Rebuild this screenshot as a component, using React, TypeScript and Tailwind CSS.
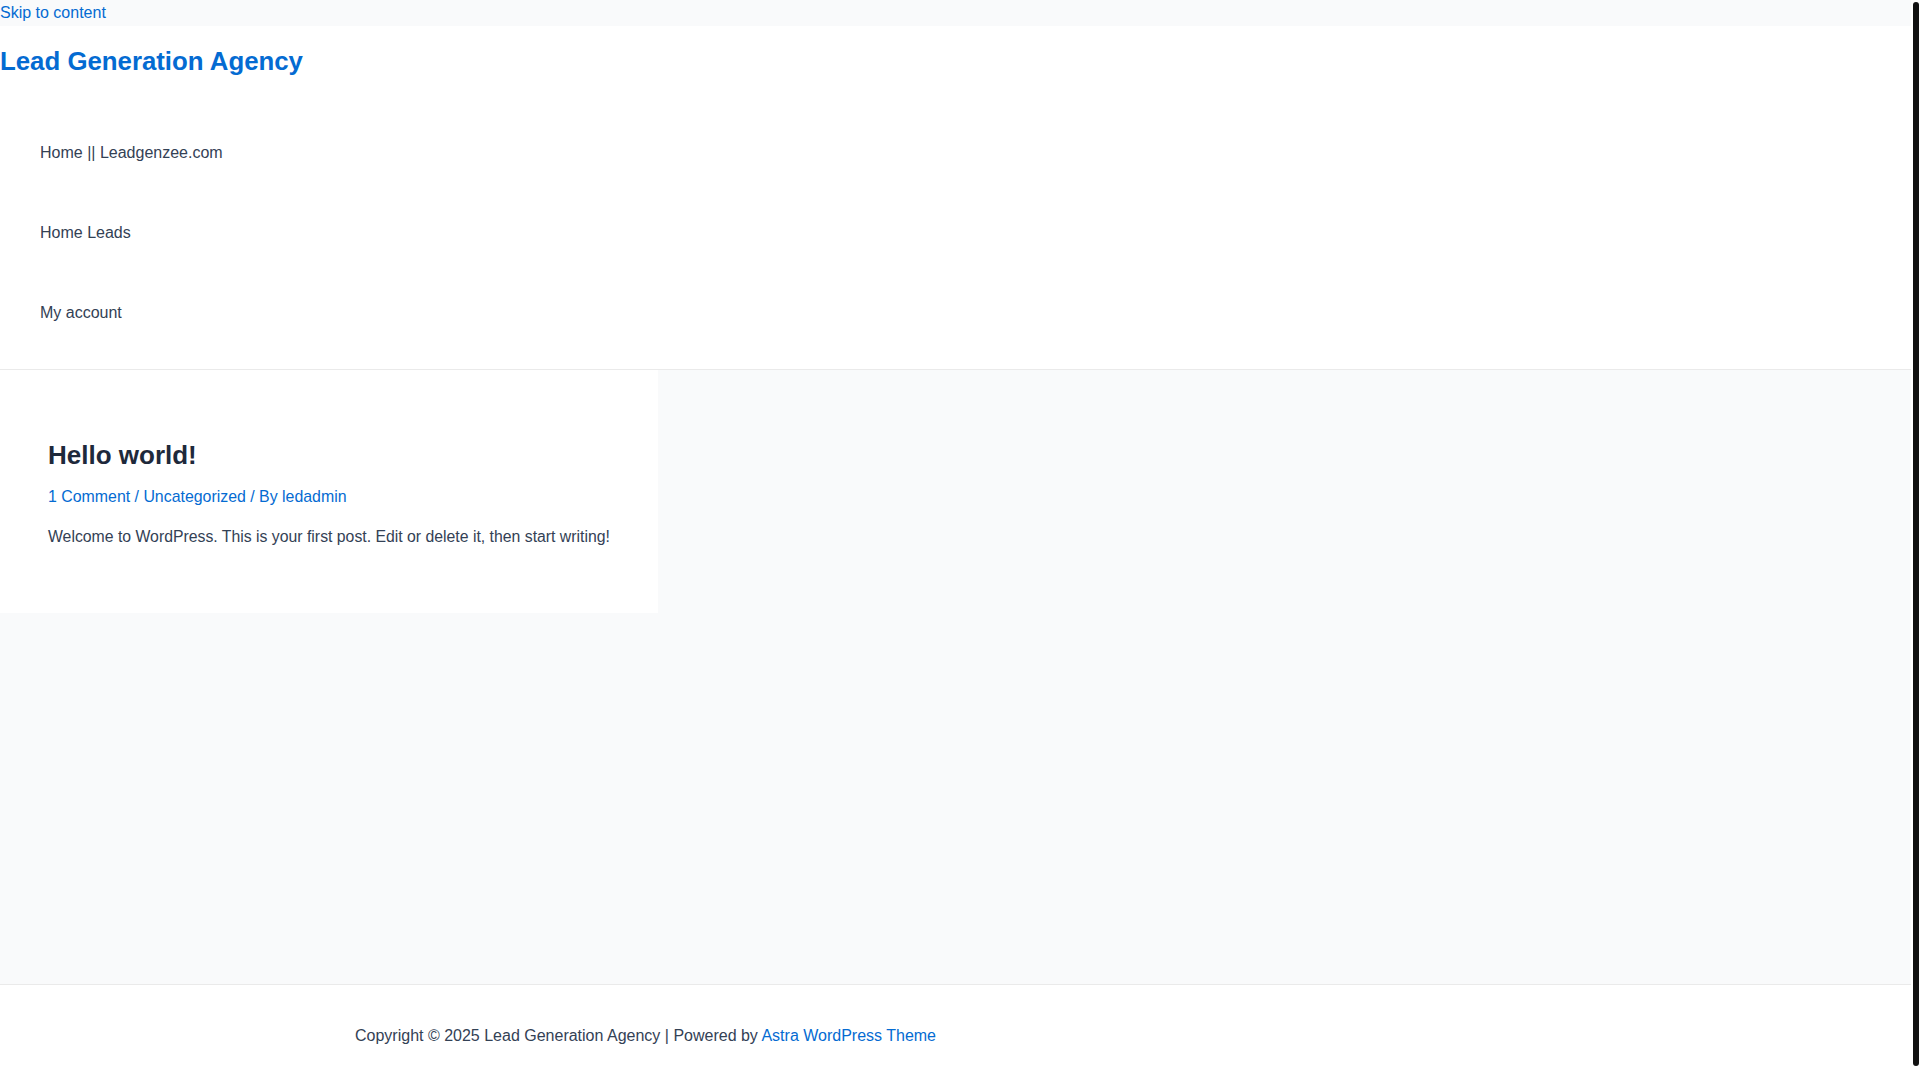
export default function App() {
  const navItems = ['Home || Leadgenzee.com', 'Home Leads', 'My account']

  return (
    <div className="flex h-screen w-full overflow-hidden bg-white font-['Liberation_Sans',Arial,sans-serif] text-[16px] text-[#334155]">
      <div className="flex min-w-0 flex-1 flex-col">
        {/* skip link bar */}
        <div className="h-[26px] bg-[#f9fafb] leading-[26px]">
          <a href="#content" className="text-[#046bd2]">Skip to content</a>
        </div>

        <header className="border-b border-[#eaeaea] bg-white pb-[16px]">
          <div className="pt-[15px]">
            <a href="#" className="text-[25.8px] font-bold leading-[40px] text-[#046bd2]">
              Lead Generation Agency
            </a>
          </div>
          <ul className="mt-[32px] pl-[40px]">
            {navItems.map((item) => (
              <li key={item} className="leading-[80px]">
                <a href="#" className="text-[#334155]">{item}</a>
              </li>
            ))}
          </ul>
        </header>

        <main id="content" className="flex-1 bg-[#f9fafb]">
          <article className="w-[658px] bg-white px-[48px] pb-[64px] pt-[69px]">
            <h2 className="text-[26px] font-bold leading-[32px] text-[#1e293b]">Hello world!</h2>
            <div className="mt-[14px] text-[15.9px] leading-[24px] text-[#046bd2]">
              <a href="#">1 Comment</a> / <a href="#">Uncategorized</a> / By <a href="#">ledadmin</a>
            </div>
            <p className="mt-[16px] whitespace-nowrap text-[15.8px] leading-[24px]">
              Welcome to WordPress. This is your first post. Edit or delete it, then start writing!
            </p>
          </article>
        </main>

        <footer className="h-[96px] border-t border-[#eaeaea] bg-white pl-[355px] pt-[39px] leading-[24px]">
          Copyright © 2025 Lead Generation Agency | Powered by{' '}
          <a href="#" className="text-[#046bd2]">Astra WordPress Theme</a>
        </footer>
      </div>

      {/* scrollbar */}
      <div className="relative w-[9px] bg-white">
        <div className="absolute bottom-[14px] right-[1px] top-[2px] w-[6px] rounded-full bg-[#111111]" />
      </div>
    </div>
  )
}
